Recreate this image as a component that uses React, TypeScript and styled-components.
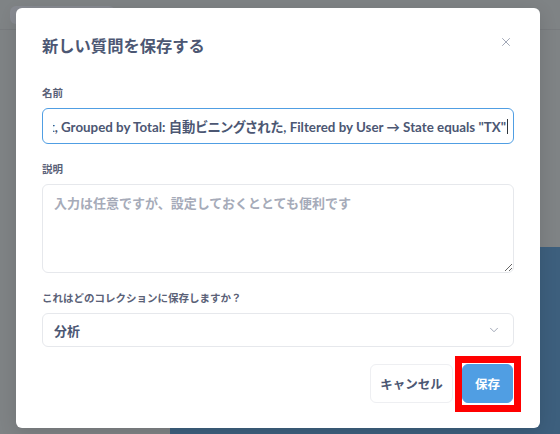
import styled, { createGlobalStyle } from "styled-components";
import { X, ChevronDown } from "lucide-react";

const GlobalStyle = createGlobalStyle`
  html, body {
    margin: 0;
    padding: 0;
  }
  body {
    font-family: Lato, "Noto Sans CJK JP", sans-serif;
    -webkit-font-smoothing: antialiased;
  }
`;

const Page = styled.div`
  position: relative;
  width: 560px;
  height: 434px;
  overflow: hidden;
  background: #7f8385;
  display: flex;
  flex-direction: column;
`;

const TopBar = styled.div`
  height: 30px;
  box-sizing: border-box;
  border-bottom: 1px solid #787b7e;
  padding: 6px 10px 0;
`;

const Pill = styled.div`
  width: 105px;
  height: 18px;
  border-radius: 6px;
  background: #888b92;
`;

const Body = styled.div`
  flex: 1;
  display: grid;
  grid-template-columns: 170px 1fr;
`;

const SidePane = styled.div``;

const MainPane = styled.div`
  display: flex;
  flex-direction: column;
`;

const Rows = styled.div`
  height: 217px;
`;

const BlueArea = styled.div`
  flex: 1;
  background: #3d5f7d;
`;

const Modal = styled.div`
  position: absolute;
  left: 16px;
  top: 8px;
  width: 524px;
  height: 420px;
  box-sizing: border-box;
  background: #fff;
  border-radius: 6px;
  padding: 26px 26px 26px;
  display: flex;
  flex-direction: column;
  box-shadow: 0 4px 18px rgba(0, 0, 0, 0.12);
`;

const Header = styled.div`
  display: flex;
  justify-content: space-between;
  align-items: flex-start;
  margin-bottom: 27px;
`;

const Title = styled.h2`
  margin: 0;
  font-size: 16.3px;
  line-height: 24px;
  font-weight: 700;
  color: #4c5773;
`;

const CloseBtn = styled.button`
  border: 0;
  background: none;
  padding: 0;
  margin: 1px 1px 0 0;
  color: #949aab;
  display: flex;
`;

const Field = styled.div`
  display: flex;
  flex-direction: column;
  margin-bottom: 17px;
`;

const Label = styled.label`
  font-size: 10.5px;
  line-height: 16px;
  font-weight: 700;
  color: #5a6177;
  margin-bottom: 7px;
`;

const NameBox = styled.div`
  height: 36px;
  box-sizing: border-box;
  border: 1.5px solid #509ee3;
  border-radius: 6px;
  padding: 0 5px 0 10px;
  display: flex;
  align-items: center;
`;

const NameText = styled.div`
  flex: 1;
  min-width: 0;
  display: flex;
  justify-content: flex-end;
  align-items: center;
  overflow: hidden;
  white-space: nowrap;
  font-size: 13.35px;
  font-weight: 700;
  color: #4c5773;
  font-feature-settings: "palt";
`;

const Caret = styled.span`
  display: inline-block;
  width: 1px;
  height: 15px;
  background: #2e353b;
  margin-left: 1px;
  flex-shrink: 0;
`;

const TextArea = styled.textarea`
  height: 89px;
  box-sizing: border-box;
  border: 1px solid #e6e8ec;
  border-radius: 6px;
  padding: 8px 11px;
  font-family: inherit;
  font-size: 13px;
  font-weight: 700;
  color: #4c5773;
  outline: none;
  &::placeholder {
    color: #a6abb9;
  }
`;

const Select = styled.div`
  height: 34px;
  box-sizing: border-box;
  border: 1px solid #e6e8ec;
  border-radius: 6px;
  padding: 0 12px 0 11px;
  display: flex;
  align-items: center;
  justify-content: space-between;
  font-size: 13px;
  font-weight: 700;
  color: #4c5773;
  svg {
    color: #949aab;
  }
`;

const Footer = styled.div`
  display: flex;
  justify-content: flex-end;
  gap: 9px;
  margin-top: auto;
  padding-right: 1px;
`;

const Button = styled.button<{ $primary?: boolean }>`
  position: relative;
  height: 39px;
  box-sizing: border-box;
  border-radius: 6px;
  font-family: inherit;
  font-size: 12.5px;
  font-weight: 700;
  padding: ${(p) => (p.$primary ? "0 12px" : "0 8px")};
  border: 1px solid ${(p) => (p.$primary ? "#509ee3" : "#eeeff2")};
  background: ${(p) => (p.$primary ? "#509ee3" : "#fff")};
  color: ${(p) => (p.$primary ? "#fff" : "#4c5773")};
  min-width: ${(p) => (p.$primary ? "50px" : "83px")};
`;

const Highlight = styled.span`
  position: absolute;
  left: -8px;
  right: -9px;
  top: -9px;
  bottom: -10px;
  border: 7px solid #ff0000;
  pointer-events: none;
`;

export default function App() {
  return (
    <>
      <GlobalStyle />
      <Page>
        <TopBar>
          <Pill />
        </TopBar>
        <Body>
          <SidePane />
          <MainPane>
            <Rows />
            <BlueArea />
          </MainPane>
        </Body>
        <Modal>
          <Header>
            <Title>新しい質問を保存する</Title>
            <CloseBtn aria-label="close">
              <X size={14} strokeWidth={1.5} />
            </CloseBtn>
          </Header>
          <Field>
            <Label>名前</Label>
            <NameBox>
              <NameText>
                Orders, Count, Grouped by Total: 自動ビニングされた, Filtered by User → State equals "TX"
                <Caret />
              </NameText>
            </NameBox>
          </Field>
          <Field>
            <Label>説明</Label>
            <TextArea placeholder="入力は任意ですが、設定しておくととても便利です" />
          </Field>
          <Field>
            <Label>これはどのコレクションに保存しますか？</Label>
            <Select>
              <span>分析</span>
              <ChevronDown size={14} strokeWidth={1.5} />
            </Select>
          </Field>
          <Footer>
            <Button>キャンセル</Button>
            <Button $primary>
              保存
              <Highlight />
            </Button>
          </Footer>
        </Modal>
      </Page>
    </>
  );
}
